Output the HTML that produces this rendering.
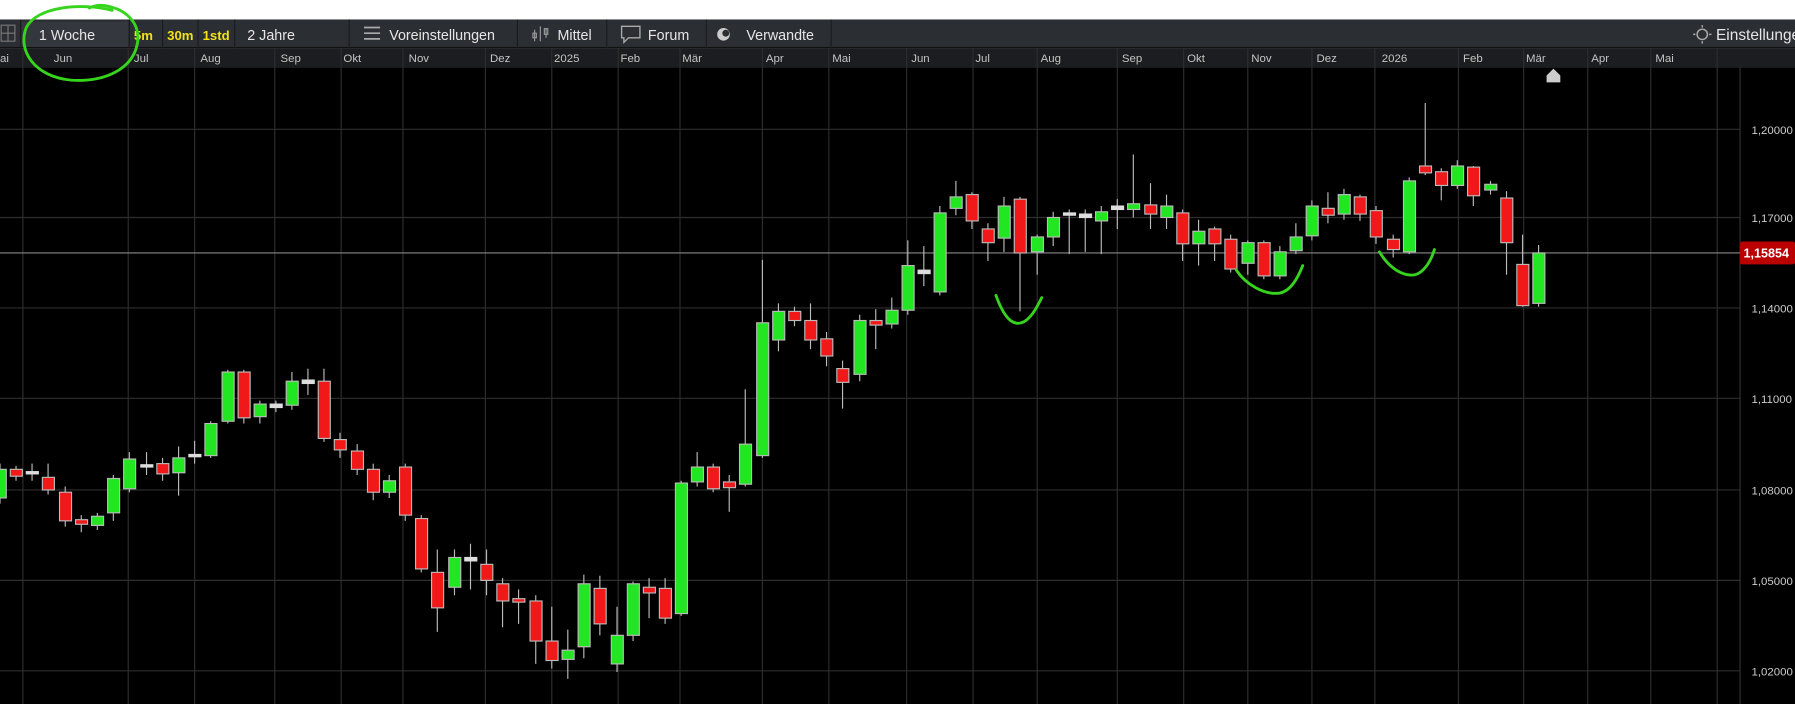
<!DOCTYPE html>
<html><head><meta charset="utf-8"><style>
html,body{margin:0;padding:0;background:#fff;width:1795px;height:704px;overflow:hidden}
svg{display:block}
</style></head><body>
<svg width="1795" height="704" viewBox="0 0 1568 615" preserveAspectRatio="none" font-family="Liberation Sans, sans-serif">
<rect x="0" y="0" width="1568" height="17" fill="#fff"/>
<rect x="0" y="17" width="1568" height="25" fill="#2b2e33"/>
<rect x="0" y="41" width="1568" height="1" fill="#111"/>
<rect x="0" y="42" width="1568" height="17" fill="#1c1d20"/>
<rect x="0" y="59" width="1568" height="556" fill="#000"/>
<!-- toolbar -->
<g fill="#8a8d92"><rect x="1" y="22" width="12" height="14" fill="none" stroke="#777" stroke-width="1"/><line x1="7" y1="22" x2="7" y2="36" stroke="#777"/><line x1="1" y1="29" x2="13" y2="29" stroke="#777"/></g>
<rect x="19" y="19" width="93" height="22" fill="#34373d"/>
<g stroke="#1a1b1e"><line x1="18" y1="17" x2="18" y2="42"/><line x1="113" y1="17" x2="113" y2="42"/><line x1="142" y1="17" x2="142" y2="42"/><line x1="173" y1="17" x2="173" y2="42"/><line x1="205" y1="17" x2="205" y2="42"/><line x1="305" y1="17" x2="305" y2="42"/><line x1="452" y1="17" x2="452" y2="42"/><line x1="530" y1="17" x2="530" y2="42"/><line x1="617" y1="17" x2="617" y2="42"/><line x1="726" y1="17" x2="726" y2="42"/></g>
<g font-size="12.5" fill="#e6e6e6">
<text x="34" y="35">1 Woche</text>
<text x="216" y="35">2 Jahre</text>
<text x="340" y="35">Voreinstellungen</text>
<text x="487" y="35">Mittel</text>
<text x="566" y="35">Forum</text>
<text x="652" y="35">Verwandte</text>
<text x="1499" y="35" font-size="13.5">Einstellungen</text>
</g>
<g font-size="11.5" fill="#f2e21a" font-weight="bold"><text x="117" y="35">5m</text><text x="146" y="35">30m</text><text x="177" y="35">1std</text></g>
<g stroke="#aaa" stroke-width="1.5" fill="none"><line x1="318" y1="24" x2="332" y2="24"/><line x1="318" y1="29" x2="332" y2="29"/><line x1="318" y1="34" x2="332" y2="34"/></g>
<g stroke="#999" fill="none"><line x1="467" y1="26" x2="467" y2="36"/><line x1="472" y1="23" x2="472" y2="36"/><line x1="477" y1="25" x2="477" y2="33"/><rect x="465.5" y="29" width="3" height="4"/><rect x="475.5" y="25" width="3" height="5"/></g>
<path d="M543 23h16v10h-10l-4 4v-4h-2z" fill="none" stroke="#aaa" stroke-width="1.2"/>
<circle cx="632" cy="30" r="5.5" fill="#ccc"/><circle cx="634" cy="29" r="3" fill="#2b2e33"/>
<circle cx="1487" cy="30" r="4.5" fill="none" stroke="#aaa" stroke-width="1.3"/>
<g stroke="#aaa" stroke-width="1.3"><line x1="1487" y1="22" x2="1487" y2="24"/><line x1="1487" y1="36" x2="1487" y2="38"/><line x1="1479" y1="30" x2="1481" y2="30"/><line x1="1493" y1="30" x2="1495" y2="30"/></g>
<!-- grid -->
<g stroke="#2e2e2e" stroke-width="1">
<line x1="20" y1="42" x2="20" y2="615"/><line x1="112" y1="42" x2="112" y2="615"/><line x1="170" y1="42" x2="170" y2="615"/><line x1="240" y1="42" x2="240" y2="615"/><line x1="298" y1="42" x2="298" y2="615"/><line x1="352" y1="42" x2="352" y2="615"/><line x1="424" y1="42" x2="424" y2="615"/><line x1="482" y1="42" x2="482" y2="615"/><line x1="540" y1="42" x2="540" y2="615"/><line x1="594" y1="42" x2="594" y2="615"/><line x1="666" y1="42" x2="666" y2="615"/><line x1="724" y1="42" x2="724" y2="615"/><line x1="792" y1="42" x2="792" y2="615"/><line x1="850" y1="42" x2="850" y2="615"/><line x1="906" y1="42" x2="906" y2="615"/><line x1="976" y1="42" x2="976" y2="615"/><line x1="1034" y1="42" x2="1034" y2="615"/><line x1="1090" y1="42" x2="1090" y2="615"/><line x1="1146" y1="42" x2="1146" y2="615"/><line x1="1201" y1="42" x2="1201" y2="615"/><line x1="1274" y1="42" x2="1274" y2="615"/><line x1="1331" y1="42" x2="1331" y2="615"/><line x1="1387" y1="42" x2="1387" y2="615"/><line x1="1442" y1="42" x2="1442" y2="615"/><line x1="1500" y1="42" x2="1500" y2="615"/>
<line x1="0" y1="113" x2="1520" y2="113"/><line x1="0" y1="190" x2="1520" y2="190"/><line x1="0" y1="269" x2="1520" y2="269"/><line x1="0" y1="348" x2="1520" y2="348"/><line x1="0" y1="428" x2="1520" y2="428"/><line x1="0" y1="507" x2="1520" y2="507"/><line x1="0" y1="586" x2="1520" y2="586"/>
</g>
<line x1="1520" y1="59" x2="1520" y2="615" stroke="#333"/>
<g font-size="10" fill="#c4c4c4">
<text x="0" y="54">ai</text><text x="47" y="54">Jun</text><text x="117" y="54">Jul</text><text x="175" y="54">Aug</text><text x="245" y="54">Sep</text><text x="300" y="54">Okt</text><text x="357" y="54">Nov</text><text x="428" y="54">Dez</text><text x="484" y="54">2025</text><text x="542" y="54">Feb</text><text x="596" y="54">Mär</text><text x="669" y="54">Apr</text><text x="727" y="54">Mai</text><text x="796" y="54">Jun</text><text x="852" y="54">Jul</text><text x="909" y="54">Aug</text><text x="980" y="54">Sep</text><text x="1037" y="54">Okt</text><text x="1093" y="54">Nov</text><text x="1150" y="54">Dez</text><text x="1207" y="54">2026</text><text x="1278" y="54">Feb</text><text x="1333" y="54">Mär</text><text x="1390" y="54">Apr</text><text x="1446" y="54">Mai</text>
</g>
<g font-size="10" fill="#ccc">
<text x="1530" y="117">1,20000</text><text x="1530" y="194">1,17000</text><text x="1530" y="273">1,14000</text><text x="1530" y="352">1,11000</text><text x="1530" y="432">1,08000</text><text x="1530" y="511">1,05000</text><text x="1530" y="590">1,02000</text>
</g>
<line x1="0" y1="221" x2="1520" y2="221" stroke="#888" stroke-width="1"/>
<rect x="1520" y="211" width="48" height="20" fill="#b00" rx="2"/>
<text x="1523" y="225" font-size="11" font-weight="bold" fill="#fff">1,15854</text>
<path d="M1351 72v-6l6-6 6 6v6z" fill="#ccc"/>
<!-- candles -->
<g stroke="#bbb" stroke-width="1">
<path d="M0 405V440M14 407V420M28 405V420M42 405V432M57 425V460M71 450V465M85 448V463M99 415V455M113 395V430M128 395V415M142 400V420M156 390V433M170 385V405M184 368V400M199 323V370M213 323V370M227 350V370M241 350V360M255 325V358M269 322V345M283 322V386M297 378V400M312 388V415M326 405V437M340 415V435M354 405V455M368 450V500M382 480V552M397 480V520M411 475V515M425 480V520M439 505V548M453 515V545M468 520V580M482 530V584M496 550V593M510 502V575M524 503V555M539 530V587M553 508V560M567 505V540M581 505V545M595 420V538M609 395V425M623 405V430M637 415V447M651 340V425M666 227V400M680 265V307M694 268V285M708 265V305M722 290V320M736 315V357M751 275V333M765 270V305M779 260V287M793 210V275M807 215V250M821 180V258M835 158V188M849 168V200M863 195V228M877 172V220M891 172V272M906 205V240M920 185V215M934 183V222M948 183V220M962 180V222M976 174V200M990 135V190M1005 160V200M1019 170V200M1033 183V228M1047 192V232M1061 198V228M1075 205V238M1090 210V240M1104 210V244M1118 215V244M1132 195V222M1146 175V210M1160 168V195M1174 165V192M1188 170V193M1202 180V213M1217 205V225M1231 155V222M1245 90V153M1259 147V175M1273 140V165M1287 145V180M1302 158V170M1316 167V240M1330 205V268M1344 214V268" fill="none"/>
<g fill="#22e622">
<rect x="-5" y="410" width="10.5" height="25"/><rect x="80" y="451" width="10.5" height="8"/><rect x="94" y="418" width="10.5" height="30"/><rect x="108" y="401" width="10.5" height="26"/><rect x="151" y="400" width="10.5" height="13"/><rect x="179" y="370" width="10.5" height="28"/><rect x="194" y="325" width="10.5" height="43"/><rect x="222" y="353" width="10.5" height="11"/><rect x="250" y="333" width="10.5" height="21"/><rect x="335" y="420" width="10.5" height="10"/><rect x="392" y="487" width="10.5" height="26"/><rect x="491" y="568" width="10.5" height="8"/><rect x="505" y="510" width="10.5" height="55"/><rect x="534" y="555" width="10.5" height="25"/><rect x="548" y="510" width="10.5" height="45"/><rect x="590" y="422" width="10.5" height="114"/><rect x="604" y="408" width="10.5" height="13"/><rect x="646" y="388" width="10.5" height="35"/><rect x="661" y="282" width="10.5" height="116"/><rect x="675" y="272" width="10.5" height="25"/><rect x="746" y="280" width="10.5" height="47"/><rect x="774" y="271" width="10.5" height="12"/><rect x="788" y="232" width="10.5" height="39"/><rect x="816" y="186" width="10.5" height="69"/><rect x="830" y="172" width="10.5" height="10"/><rect x="872" y="180" width="10.5" height="28"/><rect x="901" y="207" width="10.5" height="13"/><rect x="915" y="190" width="10.5" height="17"/><rect x="957" y="185" width="10.5" height="8"/><rect x="985" y="178" width="10.5" height="5"/><rect x="1014" y="180" width="10.5" height="10"/><rect x="1042" y="202" width="10.5" height="11"/><rect x="1085" y="212" width="10.5" height="18"/><rect x="1113" y="220" width="10.5" height="21"/><rect x="1127" y="207" width="10.5" height="12"/><rect x="1141" y="180" width="10.5" height="26"/><rect x="1169" y="170" width="10.5" height="17"/><rect x="1226" y="158" width="10.5" height="62"/><rect x="1268" y="145" width="10.5" height="17"/><rect x="1297" y="161" width="10.5" height="5"/><rect x="1339" y="221" width="10.5" height="44"/>
</g>
<g fill="#f01818">
<rect x="9" y="410" width="10.5" height="6"/><rect x="37" y="417" width="10.5" height="11"/><rect x="52" y="430" width="10.5" height="25"/><rect x="66" y="454" width="10.5" height="4"/><rect x="137" y="405" width="10.5" height="9"/><rect x="208" y="325" width="10.5" height="40"/><rect x="278" y="333" width="10.5" height="50"/><rect x="292" y="384" width="10.5" height="9"/><rect x="307" y="394" width="10.5" height="16"/><rect x="321" y="410" width="10.5" height="20"/><rect x="349" y="408" width="10.5" height="42"/><rect x="363" y="453" width="10.5" height="44"/><rect x="377" y="500" width="10.5" height="31"/><rect x="420" y="493" width="10.5" height="14"/><rect x="434" y="510" width="10.5" height="15"/><rect x="448" y="523" width="10.5" height="3"/><rect x="463" y="525" width="10.5" height="35"/><rect x="477" y="560" width="10.5" height="17"/><rect x="519" y="514" width="10.5" height="31"/><rect x="562" y="513" width="10.5" height="5"/><rect x="576" y="514" width="10.5" height="26"/><rect x="618" y="408" width="10.5" height="19"/><rect x="632" y="421" width="10.5" height="5"/><rect x="689" y="272" width="10.5" height="8"/><rect x="703" y="280" width="10.5" height="17"/><rect x="717" y="296" width="10.5" height="15"/><rect x="731" y="322" width="10.5" height="12"/><rect x="760" y="280" width="10.5" height="4"/><rect x="844" y="170" width="10.5" height="23"/><rect x="858" y="200" width="10.5" height="12"/><rect x="886" y="174" width="10.5" height="47"/><rect x="1000" y="179" width="10.5" height="8"/><rect x="1028" y="186" width="10.5" height="27"/><rect x="1056" y="200" width="10.5" height="13"/><rect x="1070" y="209" width="10.5" height="26"/><rect x="1099" y="212" width="10.5" height="29"/><rect x="1155" y="182" width="10.5" height="6"/><rect x="1183" y="172" width="10.5" height="15"/><rect x="1197" y="184" width="10.5" height="23"/><rect x="1212" y="209" width="10.5" height="9"/><rect x="1240" y="145" width="10.5" height="6"/><rect x="1254" y="150" width="10.5" height="12"/><rect x="1282" y="146" width="10.5" height="25"/><rect x="1311" y="173" width="10.5" height="39"/><rect x="1325" y="231" width="10.5" height="36"/>
</g>
<g fill="#ddd" stroke="#ddd">
<rect x="23" y="412" width="10.5" height="2"/><rect x="123" y="406" width="10.5" height="2"/><rect x="165" y="397" width="10.5" height="2"/><rect x="236" y="353" width="10.5" height="3"/><rect x="264" y="332" width="10.5" height="3"/><rect x="406" y="487" width="10.5" height="3"/><rect x="802" y="236" width="10.5" height="3"/><rect x="929" y="186" width="10.5" height="2"/><rect x="943" y="187" width="10.5" height="3"/><rect x="971" y="180" width="10.5" height="3"/>
</g>
</g>
<!-- annotations -->
<g stroke="#36d41c" stroke-width="2.5" fill="none" stroke-linecap="round">
<path d="M98 9C70 2 32 6 23 24C15 44 30 67 62 70C92 72 116 60 120 38C123 20 110 8 92 5C86 4 82 5 78 7"/>
<path d="M870 258C875 272 882 285 892 282C900 280 906 268 910 260"/>
<path d="M1080 236C1088 248 1104 258 1118 256C1128 254 1134 242 1138 232"/>
<path d="M1205 220C1212 232 1224 242 1236 240C1244 238 1250 228 1253 218"/>
</g>
</svg>
</body></html>
